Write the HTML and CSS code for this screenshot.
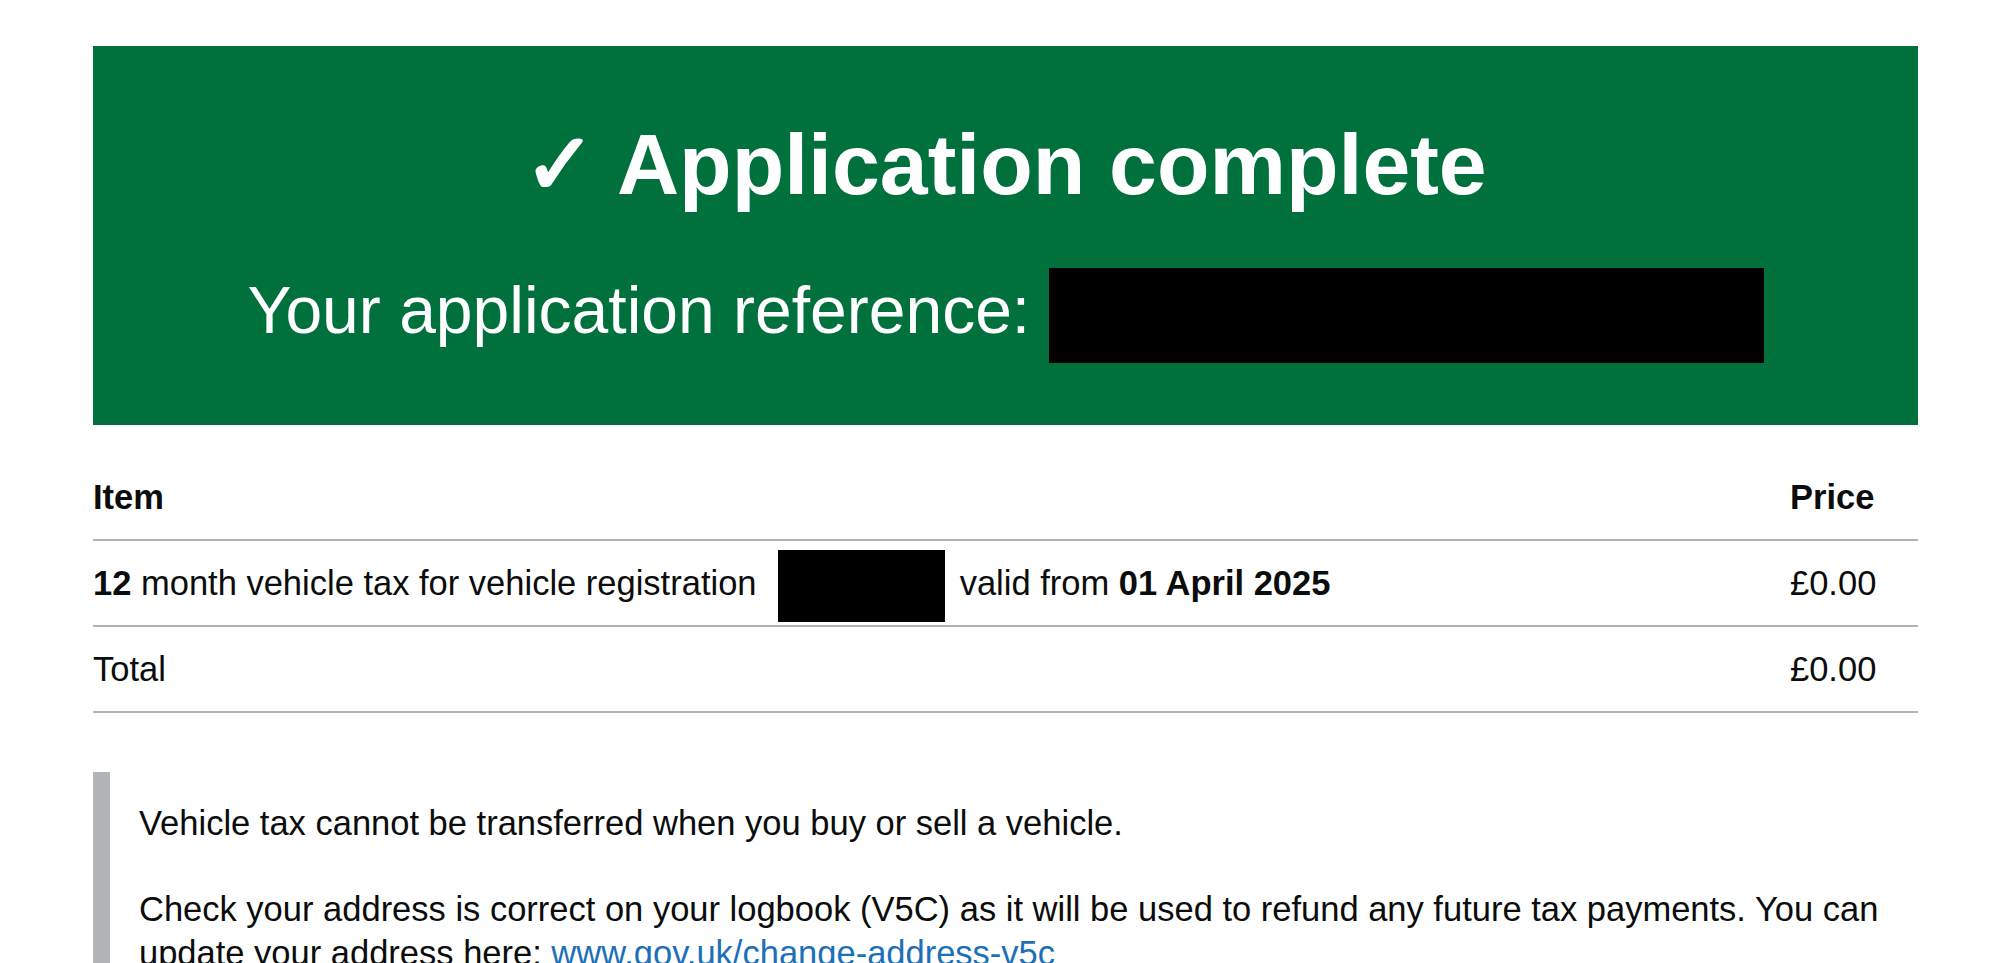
FILE: index.html
```html
<!DOCTYPE html>
<html lang="en">
<head>
    <meta charset="UTF-8">
    <title>Application complete</title>
    <link rel="stylesheet" href="styles.css">
</head>
<body>
<div class="page">
    <div class="panel">
        <h1 class="panel-title">&#10003; Application complete</h1>
        <div class="panel-body">
            Your application reference: <span class="redact redact-ref"></span>
        </div>
    </div>

    <table class="summary">
        <thead>
            <tr>
                <th class="col-item">Item</th>
                <th class="col-price">Price</th>
            </tr>
        </thead>
        <tbody>
            <tr>
                <td><b>12</b> month vehicle tax for vehicle registration <span class="redact redact-reg"></span> valid from <b>01 April 2025</b></td>
                <td class="col-price">&pound;0.00</td>
            </tr>
            <tr>
                <td>Total</td>
                <td class="col-price">&pound;0.00</td>
            </tr>
        </tbody>
    </table>

    <div class="inset">
        <p>Vehicle tax cannot be transferred when you buy or sell a vehicle.</p>
        <p>Check your address is correct on your logbook (V5C) as it will be used to refund any future tax payments. You can update your address here: <a href="#">www.gov.uk/change-address-v5c</a></p>
    </div>
</div>
</body>
</html>
```

FILE: styles.css
```css
* {
    margin: 0;
    padding: 0;
    box-sizing: border-box;
}

body {
    background-color: #fff;
    color: #0b0c0c;
    font-family: "Liberation Sans", Arial, sans-serif;
    overflow: hidden;
}

.page {
    width: 1825px;
    margin: 46px 0 0 93px;
}

.panel {
    background-color: #00703c;
    color: #fff;
    text-align: center;
    height: 379px;
    padding-top: 68px;
}

.panel-title {
    font-size: 86px;
    line-height: 100px;
    font-weight: 700;
}

.panel-body {
    font-size: 66px;
    line-height: 80px;
    margin-top: 56px;
}

.redact {
    display: inline-block;
    background-color: #000;
}

.redact-ref {
    width: 715px;
    height: 95px;
    vertical-align: middle;
    margin: -20px 0 -20px 0;
}

.redact-reg {
    width: 167px;
    height: 72px;
    vertical-align: middle;
    margin: -20px 5px -20px 12px;
}

.summary {
    width: 100%;
    border-collapse: collapse;
    margin-top: 29px;
    font-size: 34.5px;
}

.summary th,
.summary td {
    text-align: left;
    height: 86px;
    line-height: 44px;
    border-bottom: 2px solid #b1b4b6;
    vertical-align: middle;
}

.summary th {
    font-weight: 700;
}

.col-item {
    width: 1697px;
}

.inset {
    margin-top: 59px;
    border-left: 17px solid #b1b4b6;
    padding: 29px 0 0 29px;
    font-size: 34.5px;
    line-height: 44px;
}

.inset p {
    margin-bottom: 42px;
}

.inset a {
    color: #1d70b8;
}
```
